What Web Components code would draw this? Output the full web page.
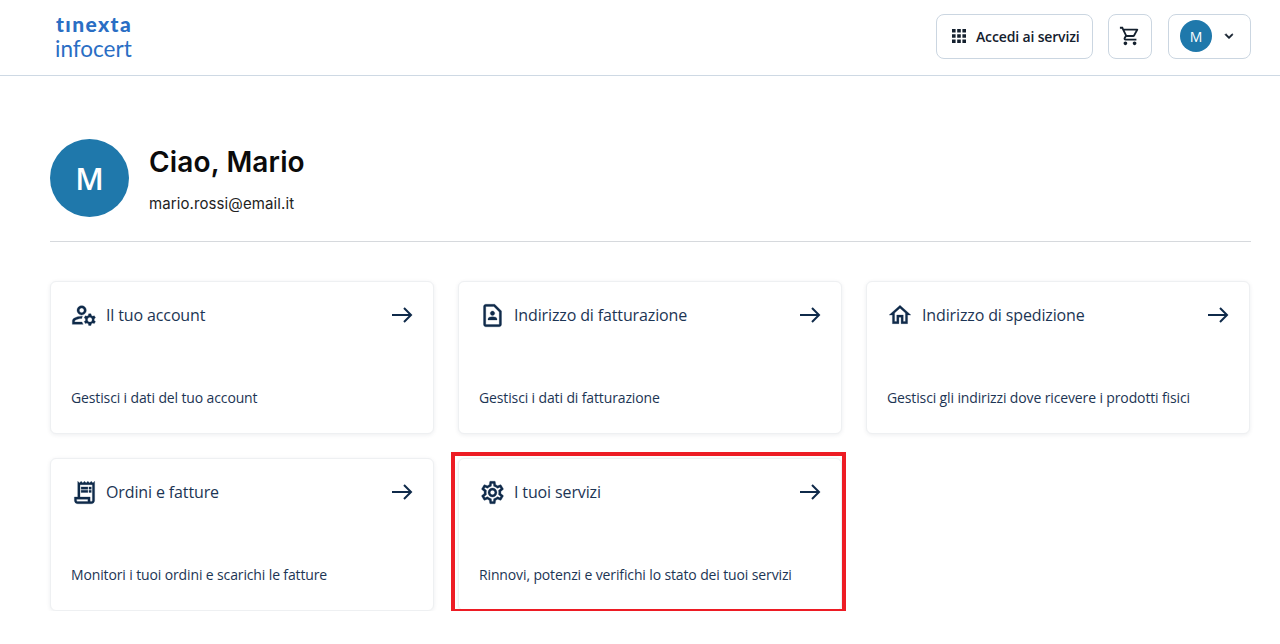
<!DOCTYPE html>
<html lang="it">
<head>
<meta charset="utf-8">
<title>Area personale</title>
<style>
  html, body { margin: 0; background: #fff; }
  body { font-family: "Open Sans", sans-serif; color: #0f2a4a; overflow: hidden; }
  svg[slot="icon"] { display: block; fill: #0f2a4a; stroke: #0f2a4a; stroke-width: 0.25; }
</style>
</head>
<body>
<app-page>
  <app-header slot="header"></app-header>
  <user-profile name="Ciao, Mario" email="mario.rossi@email.it" initial="M"></user-profile>
  <card-grid>
    <nav-card>
      <svg slot="icon" width="28" height="28" viewBox="0 0 24 24"><path d="M4 18v-.65c0-.34.16-.66.41-.81C6.1 15.53 8.03 15 10 15c.03 0 .05 0 .08.01.1-.7.3-1.37.59-1.98-.22-.02-.44-.03-.67-.03-2.42 0-4.68.67-6.61 1.82-.88.52-1.39 1.5-1.39 2.53V20h9.26c-.42-.6-.75-1.28-.97-2H4z"/><path d="M10 12c2.21 0 4-1.79 4-4s-1.79-4-4-4-4 1.79-4 4 1.79 4 4 4zm0-6c1.1 0 2 .9 2 2s-.9 2-2 2-2-.9-2-2 .9-2 2-2z"/><path d="M20.75 16c0-.22-.03-.42-.06-.63l1.14-1.01-1-1.73-1.45.49c-.32-.27-.68-.48-1.08-.63L18 11h-2l-.3 1.49c-.4.15-.76.36-1.08.63l-1.45-.49-1 1.73 1.14 1.01c-.03.21-.06.41-.06.63s.03.42.06.63l-1.14 1.01 1 1.73 1.45-.49c.32.27.68.48 1.08.63L16 21h2l.3-1.49c.4-.15.76-.36 1.08-.63l1.45.49 1-1.73-1.14-1.01c.03-.21.06-.41.06-.63zM17 18c-1.1 0-2-.9-2-2s.9-2 2-2 2 .9 2 2-.9 2-2 2z"/></svg>
      <span slot="title">Il tuo account</span>
      <span slot="desc">Gestisci i dati del tuo account</span>
    </nav-card>
    <nav-card>
      <svg slot="icon" width="27" height="27" viewBox="0 0 24 24"><path d="M14 2H6c-1.1 0-2 .9-2 2v16c0 1.1.9 2 2 2h12c1.1 0 2-.9 2-2V8l-6-6zm4 18H6V4h7.17L18 8.83V20zm-6-8c1.1 0 2-.9 2-2s-.9-2-2-2-2 .9-2 2 .9 2 2 2zm4 3.43c0-.81-.48-1.53-1.22-1.85-.85-.37-1.79-.58-2.78-.58s-1.93.21-2.78.58C8.48 13.9 8 14.62 8 15.43V16h8v-.57z"/></svg>
      <span slot="title">Indirizzo di fatturazione</span>
      <span slot="desc">Gestisci i dati di fatturazione</span>
    </nav-card>
    <nav-card>
      <svg slot="icon" width="26" height="26" viewBox="0 0 24 24"><path d="M12 5.69l5 4.5V18h-2v-6H9v6H7v-7.81l5-4.5M12 3L2 12h3v8h6v-6h2v6h6v-8h3L12 3z"/></svg>
      <span slot="title">Indirizzo di spedizione</span>
      <span slot="desc">Gestisci gli indirizzi dove ricevere i prodotti fisici</span>
    </nav-card>
    <nav-card>
      <svg slot="icon" width="27" height="27" viewBox="0 0 24 24"><path d="M19.5 3.5 18 2l-1.5 1.5L15 2l-1.5 1.5L12 2l-1.5 1.5L9 2 7.5 3.5 6 2v14H3v3c0 1.66 1.34 3 3 3h12c1.66 0 3-1.34 3-3V2l-1.5 1.5zM15 20H6c-.55 0-1-.45-1-1v-1h10v2zm4-1c0 .55-.45 1-1 1s-1-.45-1-1v-3H8V5h11v14z"/><path d="M9 7h6v2H9zM16 7h2v2h-2zM9 10h6v2H9zM16 10h2v2h-2z"/></svg>
      <span slot="title">Ordini e fatture</span>
      <span slot="desc">Monitori i tuoi ordini e scarichi le fatture</span>
    </nav-card>
    <nav-card highlighted>
      <svg slot="icon" width="27" height="27" viewBox="0 0 24 24"><path d="M19.43 12.98c.04-.32.07-.64.07-.98 0-.34-.03-.66-.07-.98l2.11-1.65c.19-.15.24-.42.12-.64l-2-3.46c-.09-.16-.26-.25-.44-.25-.06 0-.12.01-.17.03l-2.49 1c-.52-.4-1.08-.73-1.69-.98l-.38-2.65C14.46 2.18 14.25 2 14 2h-4c-.25 0-.46.18-.49.42l-.38 2.65c-.61.25-1.17.59-1.69.98l-2.49-1c-.06-.02-.12-.03-.18-.03-.17 0-.34.09-.43.25l-2 3.46c-.13.22-.07.49.12.64l2.11 1.65c-.04.32-.07.65-.07.98 0 .33.03.66.07.98l-2.11 1.65c-.19.15-.24.42-.12.64l2 3.46c.09.16.26.25.44.25.06 0 .12-.01.17-.03l2.49-1c.52.4 1.08.73 1.69.98l.38 2.65c.03.24.24.42.49.42h4c.25 0 .46-.18.49-.42l.38-2.65c.61-.25 1.17-.59 1.69-.98l2.49 1c.06.02.12.03.18.03.17 0 .34-.09.43-.25l2-3.46c.12-.22.07-.49-.12-.64l-2.11-1.65zm-1.98-1.71c.04.31.05.52.05.73 0 .21-.02.43-.05.73l-.14 1.13.89.7 1.08.84-.7 1.21-1.27-.51-1.04-.42-.9.68c-.43.32-.84.56-1.25.73l-1.06.43-.16 1.13-.2 1.35h-1.4l-.19-1.35-.16-1.13-1.06-.43c-.43-.18-.83-.41-1.23-.71l-.91-.7-1.06.43-1.27.51-.7-1.21 1.08-.84.89-.7-.14-1.13c-.03-.31-.05-.54-.05-.74s.02-.43.05-.73l.14-1.13-.89-.7-1.08-.84.7-1.21 1.27.51 1.04.42.9-.68c.43-.32.84-.56 1.25-.73l1.06-.43.16-1.13.2-1.35h1.39l.19 1.35.16 1.13 1.06.43c.43.18.83.41 1.23.71l.91.7 1.06-.43 1.27-.51.7 1.21-1.07.85-.89.7.14 1.13zM12 8c-2.21 0-4 1.79-4 4s1.79 4 4 4 4-1.79 4-4-1.79-4-4-4zm0 6c-1.1 0-2-.9-2-2s.9-2 2-2 2 .9 2 2-.9 2-2 2z"/></svg>
      <span slot="title">I tuoi servizi</span>
      <span slot="desc">Rinnovi, potenzi e verifichi lo stato dei tuoi servizi</span>
    </nav-card>
  </card-grid>
</app-page>

<script>
// page frame: header on top, the rest padded
class AppPage extends HTMLElement {
  constructor() {
    super();
    const shadowRoot = this.attachShadow({ mode: 'open' });
    shadowRoot.innerHTML = `
      <style>
        :host { display: block; }
        main { display: block; padding: 63px 29px 0 50px; }
      </style>
      <slot name="header"></slot>
      <main><slot></slot></main>`;
  }
}

class HeaderButton extends HTMLElement {
  constructor() {
    super();
    const shadowRoot = this.attachShadow({ mode: 'open' });
    shadowRoot.innerHTML = `
      <style>
        :host {
          display: flex;
          align-items: center;
          box-sizing: border-box;
          height: 45px;
          background: #fff;
          border: 1px solid #cbd6e1;
          border-radius: 8px;
          font-size: 14px;
          font-weight: 600;
          color: #14202e;
          white-space: nowrap;
        }
      </style>
      <slot></slot>`;
  }
}

class AppHeader extends HTMLElement {
  constructor() {
    super();
    const shadowRoot = this.attachShadow({ mode: 'open' });
    shadowRoot.innerHTML = `
      <style>
        :host {
          display: flex;
          align-items: center;
          justify-content: space-between;
          box-sizing: border-box;
          height: 76px;
          padding: 0 29px 0 55px;
          border-bottom: 1px solid #ced9e4;
        }
        .logo { display: flex; flex-direction: column; color: #2a6ec4; margin-bottom: 3px; }
        .top { font: 900 21px/24px Lato, sans-serif; letter-spacing: 1.4px; margin-left: 1px; }
        .bottom { font: 400 22.5px/25px Lato, sans-serif; }
        .actions { display: flex; align-items: center; gap: 15px; margin-bottom: 3px; }
        .services { padding-left: 15px; gap: 10px; width: 157px; letter-spacing: -0.15px; }
        .cart { width: 44px; justify-content: center; margin-right: 1px; }
        .user { width: 83px; padding-left: 11px; gap: 9px; }
        .avatar {
          width: 32px; height: 32px; border-radius: 50%;
          background: #1f78ab; color: #fff;
          display: flex; align-items: center; justify-content: center;
          font-size: 14px; font-weight: 400;
        }
        svg { display: block; fill: #14202e; flex: none; }
      </style>
      <div class="logo"><span class="top">tınexta</span><span class="bottom">infocert</span></div>
      <div class="actions">
        <header-button class="services">
          <svg width="14" height="14" viewBox="0 0 14 14"><path d="M0 0h3.6v3.6H0zM5.2 0h3.6v3.6H5.2zM10.4 0H14v3.6h-3.6zM0 5.2h3.6v3.6H0zM5.2 5.2h3.6v3.6H5.2zM10.4 5.2H14v3.6h-3.6zM0 10.4h3.6V14H0zM5.2 10.4h3.6V14H5.2zM10.4 10.4H14V14h-3.6z"/></svg>
          <span>Accedi ai servizi</span>
        </header-button>
        <header-button class="cart">
          <svg width="22" height="22" viewBox="0 0 24 24"><path d="M15.55 13c.75 0 1.41-.41 1.75-1.03l3.58-6.49c.37-.66-.11-1.48-.87-1.48H5.21l-.94-2H1v2h2l3.6 7.59-1.35 2.44C4.52 15.37 5.48 17 7 17h12v-2H7l1.1-2h7.45zM6.16 6h12.15l-2.76 5H8.53L6.16 6zM7 18c-1.1 0-1.99.9-1.99 2S5.9 22 7 22s2-.9 2-2-.9-2-2-2zm10 0c-1.1 0-1.99.9-1.99 2s.89 2 1.99 2 2-.9 2-2-.9-2-2-2z"/></svg>
        </header-button>
        <header-button class="user">
          <span class="avatar">M</span>
          <svg width="16" height="16" viewBox="0 0 24 24"><path d="M16.59 8.59 12 13.17 7.41 8.59 6 10l6 6 6-6z" stroke="#14202e" stroke-width="1"/></svg>
        </header-button>
      </div>`;
  }
}

class UserProfile extends HTMLElement {
  constructor() {
    super();
    const shadowRoot = this.attachShadow({ mode: 'open' });
    shadowRoot.innerHTML = `
      <style>
        :host {
          display: flex;
          gap: 20px;
          padding-bottom: 24px;
          border-bottom: 1px solid #d6d9dd;
        }
        .avatar {
          width: 79px; height: 78px; border-radius: 50%;
          background: #1f78ab; color: #fff;
          display: flex; align-items: center; justify-content: center;
          font: 600 31px "Open Sans", sans-serif;
        }
        .text { display: flex; flex-direction: column; gap: 15px; padding-top: 6px; color: #0b0b0b; }
        h1 { margin: 0; font: 600 28px/34px Inter, sans-serif; letter-spacing: 0.15px; }
        p { margin: 0; font: 400 15px/20px Inter, sans-serif; letter-spacing: 0.1px; color: #222; }
      </style>
      <div class="avatar"></div>
      <div class="text"><h1></h1><p></p></div>`;
  }
  connectedCallback() {
    this.shadowRoot.querySelector('.avatar').textContent = this.getAttribute('initial');
    this.shadowRoot.querySelector('h1').textContent = this.getAttribute('name');
    this.shadowRoot.querySelector('p').textContent = this.getAttribute('email');
  }
}

class CardGrid extends HTMLElement {
  constructor() {
    super();
    const shadowRoot = this.attachShadow({ mode: 'open' });
    shadowRoot.innerHTML = `
      <style>
        :host {
          display: grid;
          grid-template-columns: repeat(3, 1fr);
          grid-auto-rows: 153px;
          gap: 24px;
          margin-top: 39px;
          margin-right: 1px;
        }
      </style>
      <slot></slot>`;
  }
}

class NavCard extends HTMLElement {
  constructor() {
    super();
    const shadowRoot = this.attachShadow({ mode: 'open' });
    shadowRoot.innerHTML = `
      <style>
        :host {
          display: flex;
          flex-direction: column;
          justify-content: space-between;
          position: relative;
          box-sizing: border-box;
          padding: 19px 20px 25px 19px;
          background: #fff;
          border: 1px solid #eef0f2;
          border-radius: 6px;
          box-shadow: 0 1px 4px rgba(20, 40, 70, 0.08);
          letter-spacing: -0.13px;
        }
        .head { display: flex; align-items: center; height: 28px; color: #1c3554; }
        .icon { width: 28px; height: 28px; display: flex; align-items: center; justify-content: center; margin-right: 8px; flex: none; }
        .title { flex: 1; font-size: 16px; line-height: 22px; }
        .arrow { display: block; }
        .desc { font-size: 14px; line-height: 20px; color: #1c3554; padding-left: 1px; }
        /* red marker drawn over the card */
        .mark {
          display: none;
          position: absolute;
          top: -7px; left: -8px; right: -5px; bottom: -3px;
          border: 4px solid #ed1c24;
        }
        :host([highlighted]) .mark { display: block; }
      </style>
      <div class="head">
        <span class="icon"><slot name="icon"></slot></span>
        <span class="title"><slot name="title"></slot></span>
        <svg class="arrow" width="22" height="18" viewBox="0 0 22 18" fill="none" stroke="#0f2a4a" stroke-width="2"><path d="M1 9h19M13 2l7 7-7 7"/></svg>
      </div>
      <div class="desc"><slot name="desc"></slot></div>
      <div class="mark"></div>`;
  }
}

customElements.define('app-page', AppPage);
customElements.define('header-button', HeaderButton);
customElements.define('app-header', AppHeader);
customElements.define('user-profile', UserProfile);
customElements.define('card-grid', CardGrid);
customElements.define('nav-card', NavCard);
</script>
</body>
</html>
